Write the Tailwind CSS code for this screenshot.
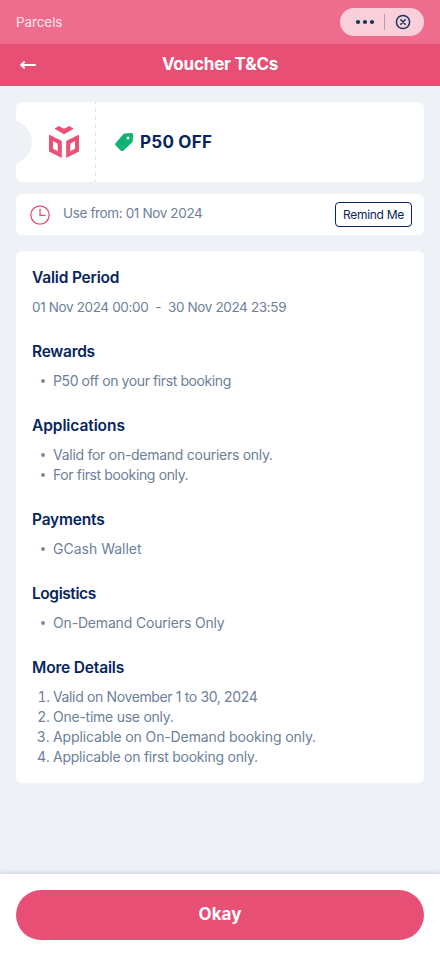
<!DOCTYPE html>
<html lang="en">
<head>
<meta charset="utf-8">
<meta name="viewport" content="width=device-width, initial-scale=1">
<title>Voucher T&amp;Cs</title>
<script src="https://cdn.jsdelivr.net/npm/@tailwindcss/browser@4"></script>
</head>
<body class="bg-[#eef2f7] font-['Inter',sans-serif]">
<div class="flex h-[956px] w-[440px] flex-col overflow-hidden text-[14px] leading-5 text-[#6d7f99]">
  <div class="flex h-11 shrink-0 items-center justify-between bg-[#ee6d8e] px-4">
    <span class="text-[13.5px] tracking-[-0.1px] text-[#fde4ea]">Parcels</span>
    <div class="flex h-7 w-[84px] items-center rounded-full bg-[#f9cfda]">
      <svg class="h-7 w-[84px]" viewBox="0 0 84 28" fill="none">
        <g fill="#19335f"><circle cx="18" cy="14" r="2.1"/><circle cx="25" cy="14" r="2.1"/><circle cx="32" cy="14" r="2.1"/></g>
        <path d="M44.5 6v16" stroke="#b09fb6"/>
        <circle cx="63" cy="14" r="6.6" stroke="#19335f" stroke-width="1.5"/>
        <path d="m60.8 11.8 4.4 4.4m0-4.4-4.4 4.4" stroke="#19335f" stroke-width="1.6" stroke-linecap="round"/>
      </svg>
    </div>
  </div>
  <header class="grid h-[42px] shrink-0 grid-cols-[40px_1fr_40px] items-center bg-[#e74f75]">
    <svg class="ml-5 h-4 w-4" viewBox="0 0 16 16" fill="none" stroke="#fff" stroke-width="2" stroke-linecap="round" stroke-linejoin="round"><path d="M1.200 8H15M4 5.200 1.200 8 4 10.800"/></svg>
    <h1 class="pb-0.5 text-center text-[17px] font-bold tracking-[-0.2px] text-white">Voucher T&amp;Cs</h1>
  </header>
  <main class="flex flex-1 flex-col px-4 pt-4">
    <section class="flex h-20 items-center rounded-md bg-white">
      <svg class="h-20 w-[80px] shrink-0" viewBox="0 0 80 80" fill="none">
        <path d="M0 17C1 19 2 19 5 21C12 25.500 16 32 16 40S12 54.500 5 59C2 61 1 61 0 63Z" fill="#eef2f7"/>
        <path d="m38.500 26.700 4.200-2.700 5.300 2.700 5.300-2.700 4.400 2.700L48 32.200Z" fill="#ec4f77"/>
        <path fill-rule="evenodd" d="m33 32.500 12.800 6.500v17L33 49.500Zm4 6.500v7.800l4.800 2.500v-7.600ZM63 32.500 50.200 39v17L63 49.500Zm-4 6.500v7.800l-4.800 2.500v-7.600Z" fill="#ec4f77"/>
        <path d="M79.500 0v80" stroke="#dfe2ef" stroke-dasharray="4 4" stroke-dashoffset="2"/>
      </svg>
      <svg class="ml-[18px] h-5 w-5" viewBox="0 0 20 20"><path fill="#0eb271" d="M10.700 1.500 17.300 1Q19.200.9 19.100 2.800L18.700 9.100Q18.600 10 18 10.600L9.500 18.500Q8 19.700 6.600 18.400L1.700 13.600Q.4 12.300 1.700 10.900L9.300 2.300Q9.900 1.600 10.700 1.500Z"/><circle cx="14" cy="6" r="1.500" fill="#fff"/></svg>
      <span class="ml-[6px] text-[17px] font-bold tracking-[0.25px] text-[#06265c]">P50 OFF</span>
    </section>
    <section class="mt-3 flex h-[41px] items-center rounded-md bg-white pr-3 pl-[14px]">
      <svg class="h-5 w-5" viewBox="0 0 20 20" fill="none" stroke="#e74f75" stroke-width="1.300"><circle cx="10" cy="10" r="9.200"/><path d="M10 3.800v6.500h5.500"/></svg>
      <span class="ml-[13px] pb-[3px] text-[13.5px] tracking-[-0.36px]">Use from: 01 Nov 2024</span>
      <button class="ml-auto h-[25px] w-[77px] rounded border border-[#06265c] text-[12px] tracking-[-0.28px] text-[#06265c]">Remind Me</button>
    </section>
    <section class="mt-4 flex h-[532px] flex-col gap-6 rounded-md bg-white p-4">
      <div>
        <h2 class="mb-[9px] text-[15.5px] leading-[21px] font-semibold tracking-[-0.18px] text-[#06265c]">Valid Period</h2>
        <p class="text-[13.5px] tracking-[-0.36px] whitespace-pre">01 Nov 2024 00:00  -  30 Nov 2024 23:59</p>
      </div>
      <div>
        <h2 class="mb-[9px] text-[15.5px] leading-[21px] font-semibold tracking-[-0.27px] text-[#06265c]">Rewards</h2>
        <ul class="pl-[8.5px]">
          <li class="flex items-center gap-[8.5px] tracking-[-0.4px] before:size-1 before:rounded-full before:bg-[#7d8ca3] before:content-['']">P50 off on your first booking</li>
        </ul>
      </div>
      <div>
        <h2 class="mb-[9px] text-[15.5px] leading-[21px] font-semibold tracking-[-0.08px] text-[#06265c]">Applications</h2>
        <ul class="pl-[8.5px]">
          <li class="flex items-center gap-[8.5px] tracking-[-0.27px] before:size-1 before:rounded-full before:bg-[#7d8ca3] before:content-['']">Valid for on-demand couriers only.</li>
          <li class="flex items-center gap-[8.5px] tracking-[-0.37px] before:size-1 before:rounded-full before:bg-[#7d8ca3] before:content-['']">For first booking only.</li>
        </ul>
      </div>
      <div>
        <h2 class="mb-[9px] text-[15.5px] leading-[21px] font-semibold tracking-[-0.2px] text-[#06265c]">Payments</h2>
        <ul class="pl-[8.5px]">
          <li class="flex items-center gap-[8.5px] before:size-1 before:rounded-full before:bg-[#7d8ca3] before:content-['']">GCash Wallet</li>
        </ul>
      </div>
      <div>
        <h2 class="mb-[9px] text-[15.5px] leading-[21px] font-semibold tracking-[-0.42px] text-[#06265c]">Logistics</h2>
        <ul class="pl-[8.5px]">
          <li class="flex items-center gap-[8.5px] tracking-[-0.17px] before:size-1 before:rounded-full before:bg-[#7d8ca3] before:content-['']">On-Demand Couriers Only</li>
        </ul>
      </div>
      <div>
        <h2 class="mb-[9px] text-[15.5px] leading-[21px] font-semibold tracking-[-0.17px] text-[#06265c]">More Details</h2>
        <ol class="list-decimal pl-[21px]">
          <li class="tracking-[-0.36px]">Valid on November 1 to 30, 2024</li>
          <li class="tracking-[-0.25px]">One-time use only.</li>
          <li class="tracking-[-0.12px]">Applicable on On-Demand booking only.</li>
          <li class="tracking-[-0.24px]">Applicable on first booking only.</li>
        </ol>
      </div>
    </section>
  </main>
  <footer class="h-[82px] shrink-0 bg-white px-4 pt-4 shadow-[0_-1px_4px_rgba(40,65,95,0.2)]">
    <button class="h-[50px] w-full rounded-full bg-[#e74f75] pb-0.5 text-[17px] font-bold text-white">Okay</button>
  </footer>
</div>
</body>
</html>
